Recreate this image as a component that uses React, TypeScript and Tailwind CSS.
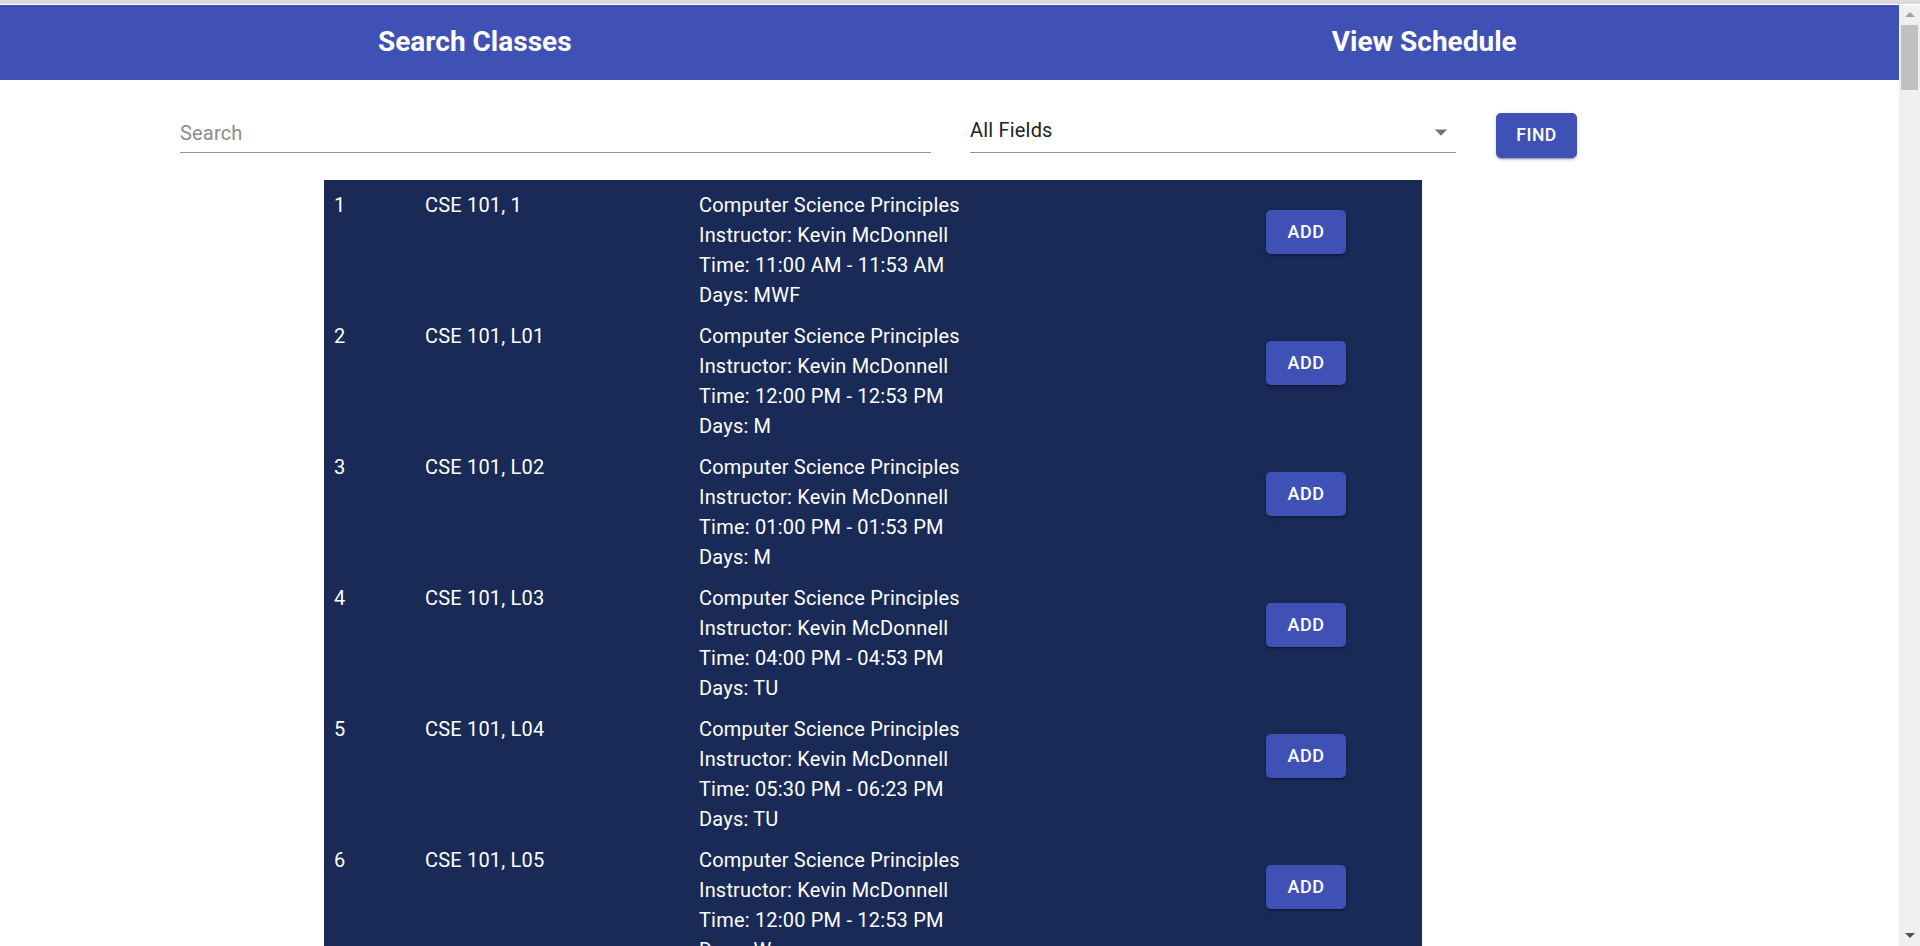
import React from "react";

type Row = { n: number; code: string; time: string; days: string };

const rows: Row[] = [
  { n: 1, code: "CSE 101, 1", time: "11:00 AM - 11:53 AM", days: "MWF" },
  { n: 2, code: "CSE 101, L01", time: "12:00 PM - 12:53 PM", days: "M" },
  { n: 3, code: "CSE 101, L02", time: "01:00 PM - 01:53 PM", days: "M" },
  { n: 4, code: "CSE 101, L03", time: "04:00 PM - 04:53 PM", days: "TU" },
  { n: 5, code: "CSE 101, L04", time: "05:30 PM - 06:23 PM", days: "TU" },
  { n: 6, code: "CSE 101, L05", time: "12:00 PM - 12:53 PM", days: "W" },
];

const font = { fontFamily: "Roboto, 'Helvetica Neue', Arial, sans-serif" };

function Scrollbar() {
  return (
    <div className="w-[21px] shrink-0 bg-[#f0f0f0] flex flex-col items-center">
      <div className="h-[20px] w-full flex items-center justify-center">
        <svg width="10" height="6" viewBox="0 0 10 6">
          <path d="M5 0 L10 5 L0 5 Z" fill="#a3a3a3" />
        </svg>
      </div>
      <div className="w-[17px] h-[65px] bg-[#c1c1c1]" />
      <div className="flex-1" />
      <div className="h-[20px] w-full flex items-center justify-center">
        <svg width="10" height="6" viewBox="0 0 10 6">
          <path d="M0 0 L10 0 L5 5 Z" fill="#505050" />
        </svg>
      </div>
    </div>
  );
}

export default function App() {
  return (
    <div className="h-screen overflow-hidden flex flex-col bg-white" style={font}>
      <div className="h-[4px] bg-[#dadada] shrink-0" />
      <div className="h-[1px] shrink-0" />
      <div className="flex flex-1 min-h-0">
        <div className="flex-1 min-w-0 overflow-hidden">
          <div className="h-[75px] bg-[#3f51b5] flex pb-[2px]">
            <div className="flex-1 flex items-center justify-center text-white text-[28px] font-bold">
              Search Classes
            </div>
            <div className="flex-1 flex items-center justify-center text-white text-[28px] font-bold">
              View Schedule
            </div>
          </div>

          <div className="flex items-start pl-[180px] pt-[33px]">
            <div className="w-[751px] h-[40px] border-b border-[#949494] flex items-end pb-[7px]">
              <span className="text-[20px] leading-[24px] tracking-[0.19px] text-[#8c8c8c]">Search</span>
            </div>
            <div className="ml-[39px] w-[486px] h-[40px] border-b border-[#949494] relative flex items-end pb-[10px]">
              <span className="text-[20px] leading-[24px] tracking-[0.19px] text-[#212121]">All Fields</span>
              <svg
                className="absolute right-0 top-[4px]"
                width="30"
                height="30"
                viewBox="0 0 24 24"
              >
                <path d="M7 10l5 5 5-5z" fill="rgba(0,0,0,0.54)" />
              </svg>
            </div>
            <button className="ml-[40px] w-[81px] h-[45px] rounded-[5px] bg-[#3f51b5] text-white text-[17.5px] font-medium tracking-[0.5px] shadow-[0_3px_1px_-2px_rgba(0,0,0,0.2),0_2px_2px_0_rgba(0,0,0,0.14),0_1px_5px_0_rgba(0,0,0,0.12)]">
              FIND
            </button>
          </div>

          <div className="ml-[324px] mt-[22px] w-[1098px] bg-[#192a56] text-white">
            {rows.map((r) => (
              <div
                key={r.n}
                className="grid grid-cols-[91px_274px_567px_80px] pl-[10px] pt-[10px] pb-[1px] text-[20px] leading-[30px] tracking-[0.19px]"
              >
                <div>{r.n}</div>
                <div>{r.code}</div>
                <div className="flex flex-col">
                  <span>Computer Science Principles</span>
                  <span>Instructor: Kevin McDonnell</span>
                  <span>Time: {r.time}</span>
                  <span>Days: {r.days}</span>
                </div>
                <div>
                  <button className="mt-[20px] w-[80px] h-[44px] rounded-[5px] bg-[#3f51b5] text-white text-[18px] leading-none font-medium tracking-[0.5px] shadow-[0_3px_1px_-2px_rgba(0,0,0,0.2),0_2px_2px_0_rgba(0,0,0,0.14),0_1px_5px_0_rgba(0,0,0,0.12)]">
                    ADD
                  </button>
                </div>
              </div>
            ))}
          </div>
        </div>
        <Scrollbar />
      </div>
    </div>
  );
}
